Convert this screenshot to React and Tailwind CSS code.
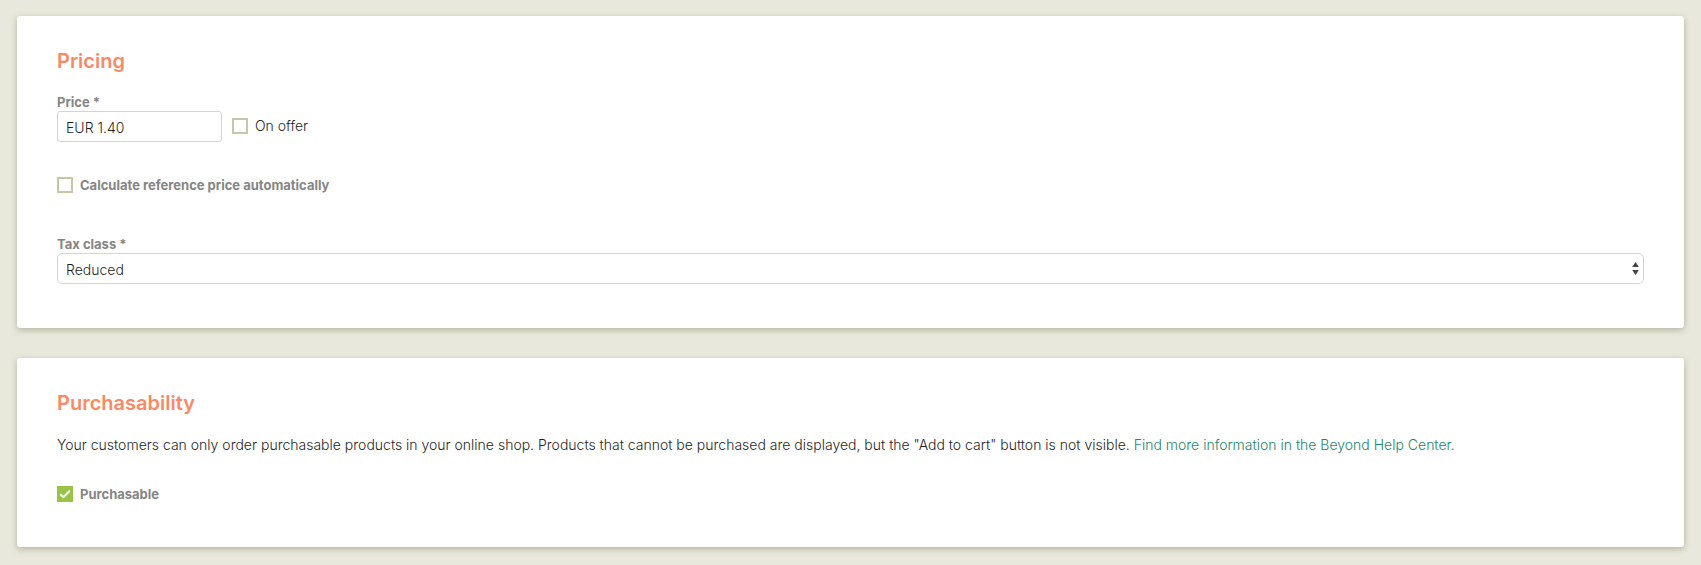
function Card({ title, children }) {
  return (
    <section className="rounded-[3px] bg-white px-10 pt-[33px] shadow-[0_2px_6px_rgba(80,80,50,0.35)]">
      <h2 className="text-[20px] leading-6 font-semibold text-[#f98965]">{title}</h2>
      {children}
    </section>
  );
}

function Checkbox({ id, label, checked = false, strong = false }) {
  return (
    <div className="flex items-center gap-[7px]">
      <span className="grid size-4">
        <input
          id={id}
          type="checkbox"
          defaultChecked={checked}
          className="peer col-start-1 row-start-1 size-4 appearance-none border-2 border-[#c8c6a5] bg-white checked:border-[#97c447] checked:bg-[#97c447]"
        />
        <svg
          viewBox="0 0 16 16"
          fill="none"
          stroke="white"
          strokeWidth="2"
          aria-hidden="true"
          className="pointer-events-none invisible col-start-1 row-start-1 size-4 peer-checked:visible"
        >
          <path d="M3.2 8.2l3.2 2.9 6.4-6.3" />
        </svg>
      </span>
      <label
        htmlFor={id}
        className={strong ? "text-[13px] leading-4 font-bold text-[#858585]" : "text-[14px] leading-4"}
      >
        {label}
      </label>
    </div>
  );
}

export default function App() {
  return (
    <main className="flex min-h-screen flex-col gap-[30px] bg-[#e8e8dc] px-[17px] pt-4 pb-[18px] font-['Inter',sans-serif] text-[14px] font-light text-[#1f1f1f]">
      <Card title="Pricing">
        <div className="mt-[21px] flex flex-wrap items-end gap-[10px]">
          <div className="flex w-[165px] flex-col gap-px">
            <label htmlFor="price" className="text-[13px] leading-4 font-bold text-[#858585]">
              Price *
            </label>
            <input
              id="price"
              type="text"
              defaultValue="EUR 1.40"
              className="h-[31px] w-full rounded-[3px] border border-[#d6d6c4] bg-white px-2 pt-0.5"
            />
          </div>
          <div className="pb-2">
            <Checkbox id="on-offer" label="On offer" />
          </div>
        </div>
        <div className="mt-[35px]">
          <Checkbox id="reference-price" label="Calculate reference price automatically" strong />
        </div>
        <div className="mt-[43px] flex flex-col gap-px pb-11">
          <label htmlFor="tax-class" className="text-[13px] leading-4 font-bold text-[#858585]">
            Tax class *
          </label>
          <div className="grid items-center">
            <select
              id="tax-class"
              defaultValue="Reduced"
              className="col-start-1 row-start-1 h-[31px] w-full appearance-none rounded-[5px] border border-[#d6d6c4] bg-white px-2 pt-0.5"
            >
              <option>Reduced</option>
              <option>Regular</option>
            </select>
            <svg
              viewBox="0 0 7 13"
              fill="#444444"
              aria-hidden="true"
              className="pointer-events-none col-start-1 row-start-1 mr-[5px] h-[13px] w-[7px] justify-self-end"
            >
              <path d="M3.5 0L6.8 5H.2zM3.5 13L.2 8h6.6z" />
            </svg>
          </div>
        </div>
      </Card>

      <Card title="Purchasability">
        <p className="mt-5 leading-5">
          Your customers can only order purchasable products in your online shop. Products that cannot be purchased are
          displayed, but the "Add to cart" button is not visible.{" "}
          <a href="#help" className="text-[#1c8570]">
            Find more information in the Beyond Help Center.
          </a>
        </p>
        <div className="mt-[31px] pb-[45px]">
          <Checkbox id="purchasable" label="Purchasable" checked strong />
        </div>
      </Card>
    </main>
  );
}
